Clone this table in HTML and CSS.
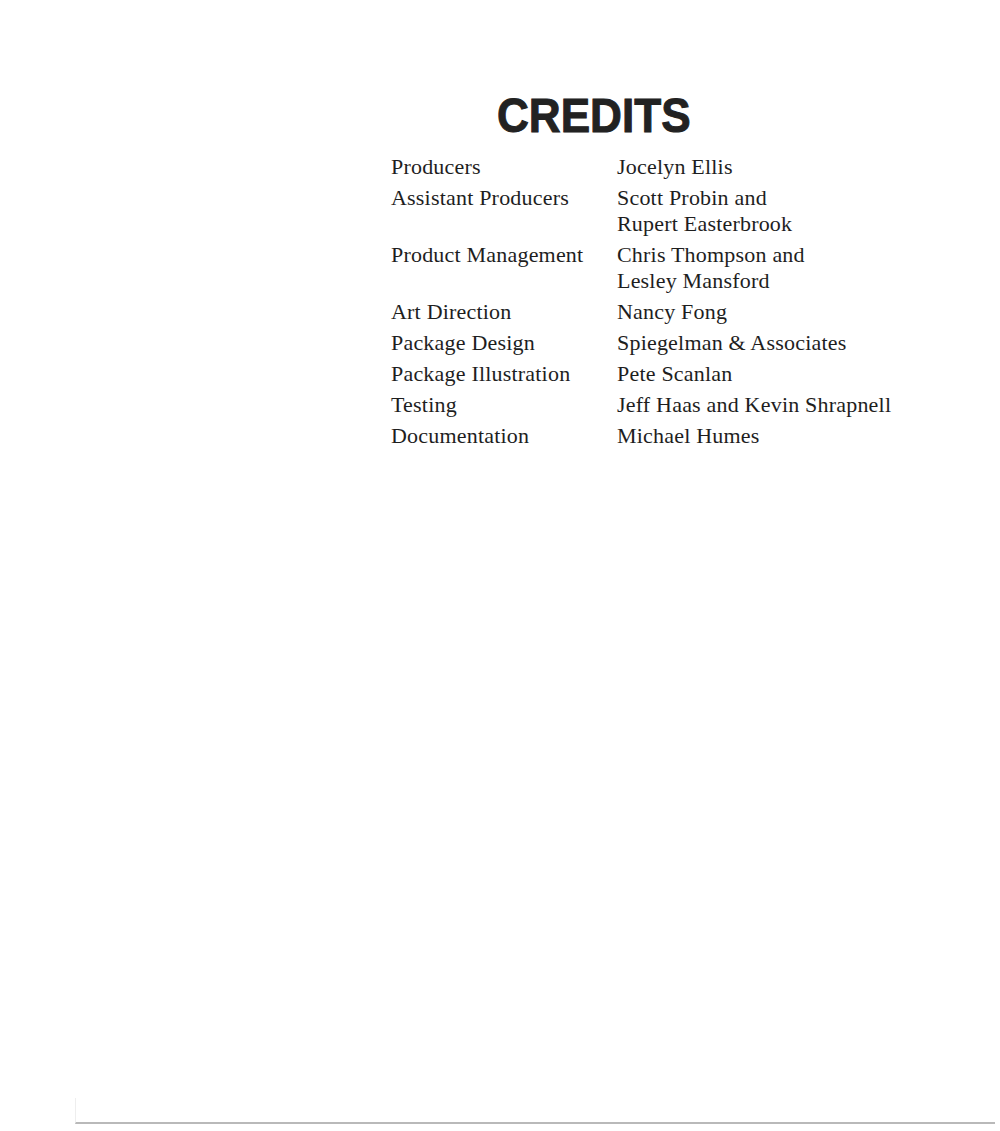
FILE: index.html
```html
<!DOCTYPE html>
<html>
<head>
<meta charset="utf-8">
<link rel="stylesheet" href="styles.css">
</head>
<body>
<div class="page">
  <div class="content">
    <h1 class="title">CREDITS</h1>
    <dl class="credits">
      <dt>Producers</dt><dd>Jocelyn Ellis</dd>
      <dt>Assistant Producers</dt><dd>Scott Probin and<br>Rupert Easterbrook</dd>
      <dt>Product Management</dt><dd>Chris Thompson and<br>Lesley Mansford</dd>
      <dt>Art Direction</dt><dd>Nancy Fong</dd>
      <dt>Package Design</dt><dd>Spiegelman &amp; Associates</dd>
      <dt>Package Illustration</dt><dd>Pete Scanlan</dd>
      <dt>Testing</dt><dd>Jeff Haas and Kevin Shrapnell</dd>
      <dt>Documentation</dt><dd>Michael Humes</dd>
    </dl>
  </div>
  <div class="sheet-edge"></div>
</div>
</body>
</html>
```

FILE: styles.css
```css
html, body {
  margin: 0;
  padding: 0;
  background: #ffffff;
}
.page {
  width: 1000px;
  height: 1131px;
  display: flex;
  flex-direction: column;
  justify-content: space-between;
}
.content {
  padding-top: 89px;
  padding-left: 391px;
}
.title {
  margin: 0 0 13px 106px;
  font-family: "Liberation Sans", Arial, sans-serif;
  font-weight: bold;
  font-size: 49px;
  line-height: 52px;
  color: #222222;
  -webkit-text-stroke: 1px #222222;
  transform: scaleX(0.9);
  transform-origin: left center;
  letter-spacing: 0;
}
.credits {
  margin: 0;
  display: grid;
  grid-template-columns: 226px auto;
  row-gap: 5px;
  font-family: "Liberation Serif", "Times New Roman", serif;
  font-size: 22px;
  letter-spacing: 0.2px;
  line-height: 26px;
  color: #1e1e1e;
}
.credits dt, .credits dd {
  margin: 0;
}
.sheet-edge {
  margin: 0 5px 7px 75px;
  height: 24px;
  border-left: 1px solid #eeeeee;
  border-bottom: 2px solid #b9b9b9;
}
```
